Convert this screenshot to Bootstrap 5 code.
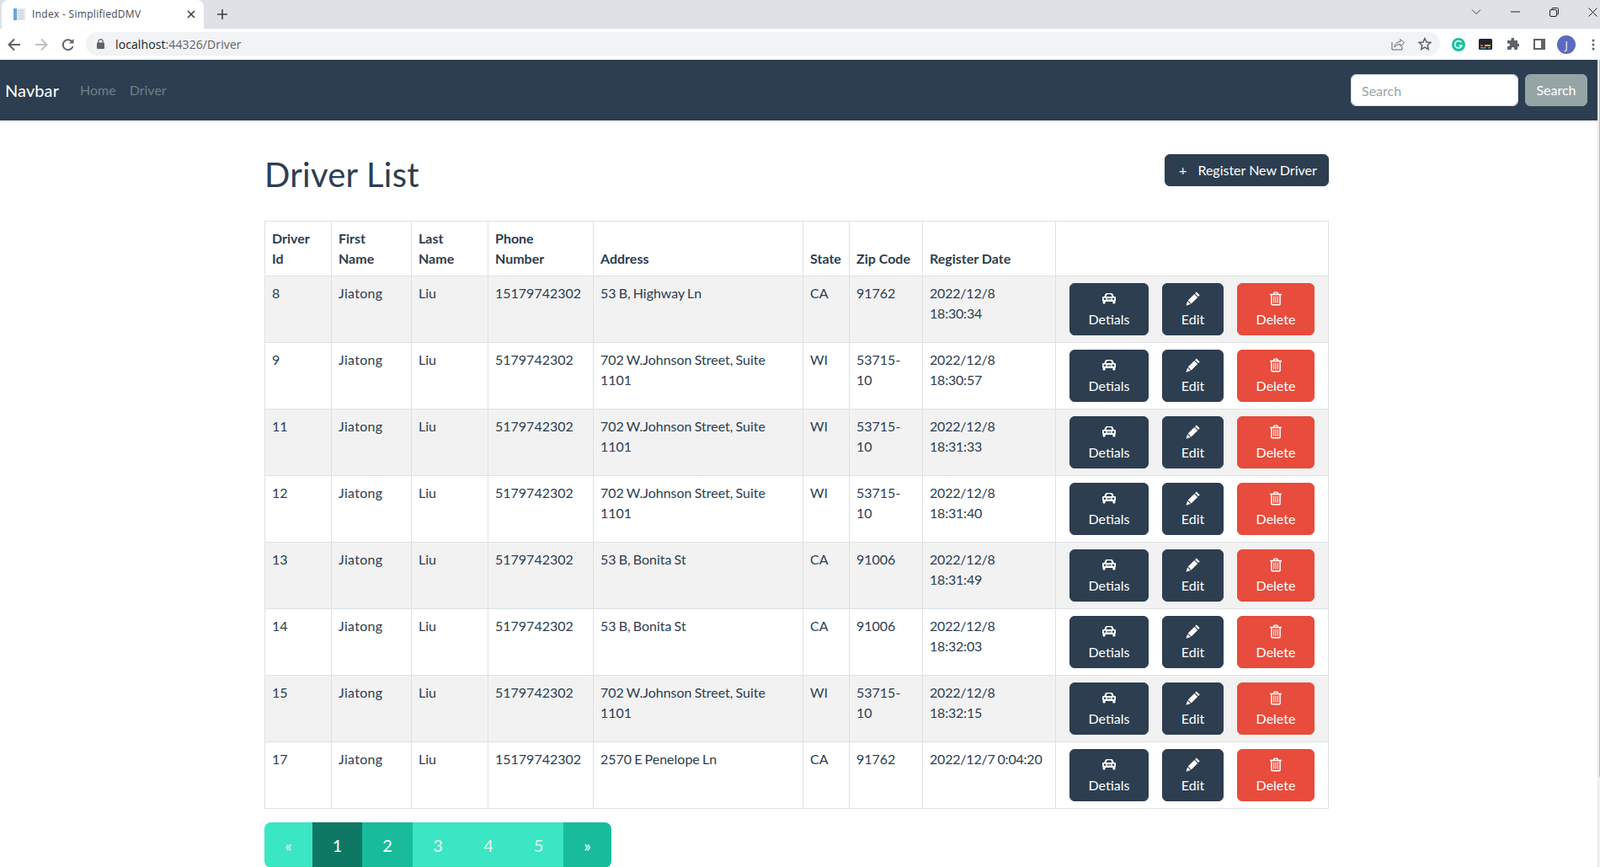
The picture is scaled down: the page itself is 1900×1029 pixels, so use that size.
<!DOCTYPE html>
<html lang="en">
<head>
<meta charset="utf-8">
<title>Index - SimplifiedDMV</title>
<link href="https://cdn.jsdelivr.net/npm/bootstrap@5.3.0/dist/css/bootstrap.min.css" rel="stylesheet">
<style>
html,body{height:1029px;overflow:hidden}
body{font-family:"Lato","Noto Sans",sans-serif;font-size:16px;line-height:1.5;color:#2c3e50;background:#fff}
.tabstrip{height:34px;background:#dee1e6}
.browser-tab{width:240px;height:34px;margin-left:2px;background:#fff;border-radius:8px 8px 0 0;padding:0 10px 0 13px;font-family:"Open Sans",sans-serif;font-size:12px;color:#45494d}
.tab-title{margin-left:7px;flex:1 1 auto;white-space:nowrap;letter-spacing:.3px}
.new-tab{margin-left:15px}
.win-controls{margin-left:auto;gap:0}
.win-btn{width:46px;height:28px}
.win-close{width:32px;justify-content:flex-end!important;padding-right:3px}
.toolbar{height:37px;background:#fff;padding:0 0 0 8px;overflow:hidden}
.nav-icon{width:18px;height:18px;margin-right:14px;flex:none}
.omnibox{flex:0 0 1608px;height:28px;margin-left:12px;padding:0 10px 0 13px;background:#f1f3f4;border-radius:14px;font-family:"Open Sans",sans-serif;font-size:14px;color:#5f6368;margin-top:-1px}
.omnibox b{font-weight:400;color:#202124}
.url{margin-left:13px;letter-spacing:.1px}
.ext-row{gap:0;margin-left:6px;flex:none}
.ext{width:32px;height:28px}
.ext-last{width:24px;justify-content:flex-start!important;padding-left:14px}
.page-wrap{height:958px}
.page-main{width:1897px;flex:0 0 1897px;overflow:hidden}
.fake-scroll{width:3px;background:#f1f1f1;border-left:1px solid #e6e6e6;position:relative}
.fake-thumb{position:absolute;right:0;top:0;width:1px;height:851px;background:#b9b9b9}
.dmv-nav{background:#2c3e50;height:72px;padding:0 12px 0 6px}
.dmv-brand{color:#fff;font-size:20px;margin-right:17px;text-decoration:none;letter-spacing:.1px}
.dmv-link{color:#6d8287;text-decoration:none;margin-left:0;padding:0 8px}
.dmv-search{width:199px;height:38px;font-size:16px;padding:6px 12px;color:#7b8a8b;border-color:#ced4da}
.dmv-search::placeholder{color:#95a5a6}
.dmv-sbtn{background:#95a5a6;border-color:#95a5a6;color:#fff;height:38px;width:74px;margin-left:8px;padding:6px 0}
.dmv-main{width:1264px;margin-left:314px;padding-top:40px}
.title-row{height:79px}
.title-row h1{font-size:40px;line-height:48px;margin:0;color:#2c3e50;font-weight:400;letter-spacing:.25px}
.reg-btn{background:#2c3e50;border-color:#2c3e50;color:#fff;height:38px;width:195px;padding:6px 0 6px 16px;text-align:left;white-space:nowrap}
.reg-btn:hover{background:#2c3e50;color:#fff}
.reg-plus{display:inline-block;margin-right:9px}
table.dmv-table{table-layout:fixed;width:1263px;margin:0;color:#2c3e50;border-color:#dee2e6;font-size:16px}
.dmv-table th,.dmv-table td{padding:8px;line-height:24px;vertical-align:top}
.dmv-table td{word-spacing:-1px}
.dmv-table td.cell-name{letter-spacing:.3px}
.dmv-table td.cell-date{letter-spacing:-.2px}
.dmv-table thead th{vertical-align:bottom;font-weight:700}
.dmv-table thead tr{height:64px}
.dmv-table tbody tr{height:79px}
.dmv-table tbody tr:nth-child(odd)>td{background:#f2f2f2}
.c1{width:79px}.c2{width:95px}.c3{width:91px}.c4{width:125px}.c5{width:249px}.c6{width:55px}.c7{width:87px}.c8{width:158px}.c9{width:324px}
.acts{gap:16px;padding-left:8px}
.act-btn{display:flex;flex-direction:column;align-items:center;justify-content:flex-start;height:62px;padding:6px 0;border-radius:6px;color:#fff;font-size:16px;line-height:24px;word-spacing:0}
.act-btn svg{display:block;height:24px}
.act-dark{background:#2c3e50;border-color:#2c3e50}
.act-red{background:#e74c3c;border-color:#e74c3c}
.w-det{width:94px}.w-edit{width:73px}.w-del{width:92px}
.dmv-pager{margin-top:16px;margin-bottom:0}
.dmv-pager .page-item .page-link{border:0;margin:0;color:#fff;background:#18bc9c;font-size:20px;padding:12px 0;line-height:30px;text-align:center;width:60px}
.dmv-pager .page-item.active .page-link{background:#0f7864;color:#fff}
.dmv-pager .page-item.disabled .page-link{background:#3be6c4;color:#ecf0f1}
.dmv-pager .page-item .page-link.arrow{width:57px}
.dmv-pager .page-item.slim-num .page-link{width:59px}
.dmv-pager .page-item:first-child .page-link{border-radius:8px 0 0 8px}
.dmv-pager .page-item:last-child .page-link{border-radius:0 8px 8px 0}
</style>
</head>
<body>
<div class="tabstrip d-flex align-items-start">
  <div class="browser-tab d-flex align-items-center">
    <svg width="16" height="16" viewBox="0 0 16 16"><rect x="1" y="1" width="4" height="14" fill="#6aa6d8"/><rect x="5" y="1" width="10" height="14" fill="#e4e8ee"/><path d="M7 4h6M7 7h6M7 10h6M7 13h6" stroke="#bfc7d2"/></svg>
    <span class="tab-title">Index - SimplifiedDMV</span>
    <svg width="10" height="10" viewBox="0 0 10 10"><path d="M1 1l8 8M9 1l-8 8" stroke="#3c4043" stroke-width="1.6"/></svg>
  </div>
  <svg class="new-tab mt-2" width="14" height="18" viewBox="0 0 14 18"><path d="M7 3v12M1 9h12" stroke="#3c4043" stroke-width="1.6"/></svg>
  <div class="win-controls d-flex">
    <div class="win-btn d-flex align-items-center justify-content-center"><svg width="14" height="9" viewBox="0 0 14 9"><path d="M2 1.500l5 5 5-5" fill="none" stroke="#3c4043" stroke-width="1"/></svg></div>
    <div class="win-btn d-flex align-items-center justify-content-center"><svg width="11" height="2" viewBox="0 0 11 2"><path d="M0 1h11" stroke="#202124"/></svg></div>
    <div class="win-btn d-flex align-items-center justify-content-center"><svg width="11" height="11" viewBox="0 0 11 11"><rect x=".5" y="2.500" width="8" height="8" rx="1.500" fill="none" stroke="#202124"/><path d="M3 2V1.500A1 1 0 0 1 4 .5h5.500a1 1 0 0 1 1 1V7a1 1 0 0 1-1 1H9" fill="none" stroke="#202124"/></svg></div>
    <div class="win-btn win-close d-flex align-items-center"><svg width="11" height="11" viewBox="0 0 11 11"><path d="M.5.5l10 10M10.500.5l-10 10" stroke="#202124"/></svg></div>
  </div>
</div>
<div class="toolbar d-flex align-items-center">
  <svg class="nav-icon" viewBox="0 0 18 18"><path d="M16 9H3M9 2.500L2.500 9 9 15.500" fill="none" stroke="#5f6368" stroke-width="2"/></svg>
  <svg class="nav-icon" viewBox="0 0 18 18"><path d="M2 9h13M9 2.500L15.500 9 9 15.500" fill="none" stroke="#bdc1c6" stroke-width="2"/></svg>
  <svg class="nav-icon m-0" viewBox="0 0 18 18"><path d="M14.500 11a6 6 0 1 1-.6-5" fill="none" stroke="#5f6368" stroke-width="2"/><path d="M15.500 2v5.500H10z" fill="#5f6368"/></svg>
  <div class="omnibox d-flex align-items-center">
    <svg width="9" height="12" viewBox="0 0 9 12"><rect y="4.500" width="9" height="7.500" rx="1" fill="#5f6368"/><path d="M2 5V3.200a2.500 2.500 0 0 1 5 0V5" fill="none" stroke="#5f6368" stroke-width="1.300"/></svg>
    <span class="url"><b>localhost</b>:44326/Driver</span>
    <div class="ms-auto d-flex align-items-center gap-3">
      <svg width="16" height="16" viewBox="0 0 16 16"><path d="M1 6v9h12v-4" fill="none" stroke="#5f6368"/><path d="M4 12c0-4 3-6.500 7-6.500V2.500l4.500 4.500L11 11V8.500C8 8.500 6 9.500 4 12z" fill="none" stroke="#5f6368"/></svg>
      <svg width="16" height="16" viewBox="0 0 16 16"><path d="M8 1.500l2 4.500 4.800.500-3.600 3.200 1 4.800L8 12.100l-4.200 2.400 1-4.800L1.200 6.500 6 6z" fill="none" stroke="#5f6368" stroke-width="1.500"/></svg>
    </div>
  </div>
  <div class="ext-row d-flex align-items-center">
    <div class="ext d-flex align-items-center justify-content-center"><svg width="16" height="16" viewBox="0 0 16 16"><circle cx="8" cy="8" r="8" fill="#15c39a"/><path d="M11.300 5.300A4.200 4.200 0 1 0 12 9H8.500" fill="none" stroke="#fff" stroke-width="1.600"/></svg></div>
    <div class="ext d-flex align-items-center justify-content-center"><svg width="16" height="13" viewBox="0 0 16 13"><rect width="16" height="13" rx="1.500" fill="#20262e"/><rect x="2" y="7" width="3" height="2" fill="#e54b4b"/><rect x="7" y="7" width="7" height="2" fill="#f2b632"/><rect x="2" y="10" width="7" height="1.500" fill="#39b4c6"/><rect x="11" y="10" width="3" height="1.500" fill="#b06cd6"/></svg></div>
    <div class="ext d-flex align-items-center justify-content-center"><svg width="15" height="15" viewBox="0 0 15 15"><path d="M5.500 1.500a1.800 1.800 0 0 1 3.600 0V3H13v3.700h1.200a1.800 1.800 0 0 1 0 3.600H13V14H9.300v-1.300a1.800 1.800 0 0 0-3.600 0V14H1v-3.900h1.200a1.800 1.800 0 0 0 0-3.600H1V3h4.500z" fill="#5f6368"/></svg></div>
    <div class="ext d-flex align-items-center justify-content-center"><svg width="14" height="13" viewBox="0 0 14 13"><rect x="1" y="1" width="12" height="11" fill="#fff" stroke="#5f6368" stroke-width="2"/><rect x="9" y="1" width="4" height="11" fill="#5f6368"/></svg></div>
    <div class="ext d-flex align-items-center justify-content-center"><svg width="22" height="22" viewBox="0 0 22 22"><circle cx="11" cy="11" r="11" fill="#5c6bc0"/><text x="11" y="15.500" text-anchor="middle" font-family="Open Sans, sans-serif" font-size="12" fill="#fff">J</text></svg></div>
    <div class="ext ext-last d-flex align-items-center"><svg width="4" height="14" viewBox="0 0 4 14"><circle cx="2" cy="2" r="1.500" fill="#5f6368"/><circle cx="2" cy="7" r="1.500" fill="#5f6368"/><circle cx="2" cy="12" r="1.500" fill="#5f6368"/></svg></div>
  </div>
</div>
<div class="page-wrap d-flex">
<div class="page-main">
  <nav class="dmv-nav d-flex align-items-center">
    <a class="dmv-brand" href="#">Navbar</a>
    <a class="dmv-link" href="#">Home</a>
    <a class="dmv-link" href="#">Driver</a>
    <form class="d-flex ms-auto">
      <input class="form-control dmv-search" type="search" placeholder="Search">
      <button class="btn dmv-sbtn" type="button">Search</button>
    </form>
  </nav>
  <main class="dmv-main">
    <div class="title-row d-flex justify-content-between align-items-start">
      <h1>Driver List</h1>
      <a class="btn reg-btn" href="#"><span class="reg-plus">+</span> Register New Driver</a>
    </div>
    <table class="table table-bordered dmv-table">
      <colgroup><col class="c1"><col class="c2"><col class="c3"><col class="c4"><col class="c5"><col class="c6"><col class="c7"><col class="c8"><col class="c9"></colgroup>
      <thead><tr><th>Driver<br>Id</th><th>First<br>Name</th><th>Last<br>Name</th><th>Phone<br>Number</th><th>Address</th><th>State</th><th>Zip Code</th><th>Register Date</th><th></th></tr></thead>
      <tbody id="rows"></tbody>
    </table>
    <ul class="pagination pagination-lg dmv-pager">
      <li class="page-item disabled"><a class="page-link arrow" href="#">&laquo;</a></li>
      <li class="page-item slim-num active"><a class="page-link" href="#">1</a></li>
      <li class="page-item"><a class="page-link" href="#">2</a></li>
      <li class="page-item disabled"><a class="page-link" href="#">3</a></li>
      <li class="page-item disabled"><a class="page-link" href="#">4</a></li>
      <li class="page-item slim-num disabled"><a class="page-link" href="#">5</a></li>
      <li class="page-item"><a class="page-link arrow" href="#">&raquo;</a></li>
    </ul>
  </main>
</div>
<div class="fake-scroll"><div class="fake-thumb"></div></div>
</div>
<script src="https://cdn.jsdelivr.net/npm/bootstrap@5.3.0/dist/js/bootstrap.bundle.min.js"></script>
<script>
var car='<svg width="16" height="24" viewBox="0 0 16 24"><path fill="#fff" d="M3.300 6.500C3.700 5.500 4.500 5 5.500 5h5c1 0 1.800.5 2.200 1.500l1 2.500H15c.5 0 1 .5 1 1v3.500c0 .5-.3.800-.6.900V16.500c0 .5-.4 1-1 1h-1c-.6 0-1-.5-1-1V15H3.600v1.500c0 .5-.4 1-1 1h-1c-.6 0-1-.5-1-1v-2.100c-.3-.1-.6-.4-.6-.9V10c0-.5.5-1 1-1h1.300zM4.600 9h6.800l-.8-2.200c-.1-.3-.4-.5-.7-.5H6.100c-.3 0-.6.200-.7.500zM3 10.500a1.300 1.300 0 1 0 0 2.600 1.300 1.300 0 0 0 0-2.600zm10 0a1.300 1.300 0 1 0 0 2.600 1.300 1.300 0 0 0 0-2.600zm-7.500.7v1.400h5v-1.400z" fill-rule="evenodd"/></svg>';
var pen='<svg width="18" height="24" viewBox="0 0 18 24"><path fill="#fff" d="M12.800 3.500l3.900 3.900L15 9.100l-3.900-3.900zM10.300 6l3.900 3.900-7.600 7.600-3.900-3.900zM2.100 14.400l3.700 3.700L.5 19.700z"/></svg>';
var bin='<svg width="14" height="24" viewBox="0 0 14 24"><path fill="#fff" fill-rule="evenodd" d="M4.700 3.500h4.600l1 2.300H14v1.500h-1.200v10.500c0 1-.7 1.700-1.500 1.700H2.700c-.8 0-1.500-.7-1.500-1.700V7.300H0V5.800h3.700zM5.500 5.800h3L8.100 4.800H5.900zM2.700 7.300v10.700h8.600V7.300zM4.200 8.500h1v8.300h-1zM6.500 8.500h1v8.300h-1zM8.800 8.500h1v8.300h-1z"/></svg>';
var j='702 W.Johnson Street, Suite 1101', b='53 B, Bonita St', z='53715-10';
var data=[[8,'15179742302','53 B, Highway Ln','CA','91762','2022/12/8 18:30:34'],[9,'5179742302',j,'WI',z,'2022/12/8 18:30:57'],[11,'5179742302',j,'WI',z,'2022/12/8 18:31:33'],[12,'5179742302',j,'WI',z,'2022/12/8 18:31:40'],[13,'5179742302',b,'CA','91006','2022/12/8 18:31:49'],[14,'5179742302',b,'CA','91006','2022/12/8 18:32:03'],[15,'5179742302',j,'WI',z,'2022/12/8 18:32:15'],[17,'15179742302','2570 E Penelope Ln','CA','91762','2022/12/7 0:04:20']];
document.getElementById('rows').innerHTML=data.map(function(r){
return '<tr><td>'+r[0]+'</td><td class="cell-name">Jiatong</td><td>Liu</td><td>'+r[1]+'</td><td>'+r[2]+'</td><td>'+r[3]+'</td><td>'+r[4]+'</td><td class="cell-date">'+r[5]+'</td><td><div class="d-flex acts"><a href="#" class="btn act-btn act-dark w-det">'+car+'Detials</a><a href="#" class="btn act-btn act-dark w-edit">'+pen+'Edit</a><a href="#" class="btn act-btn act-red w-del">'+bin+'Delete</a></div></td></tr>';
}).join('');
</script>
</body>
</html>
